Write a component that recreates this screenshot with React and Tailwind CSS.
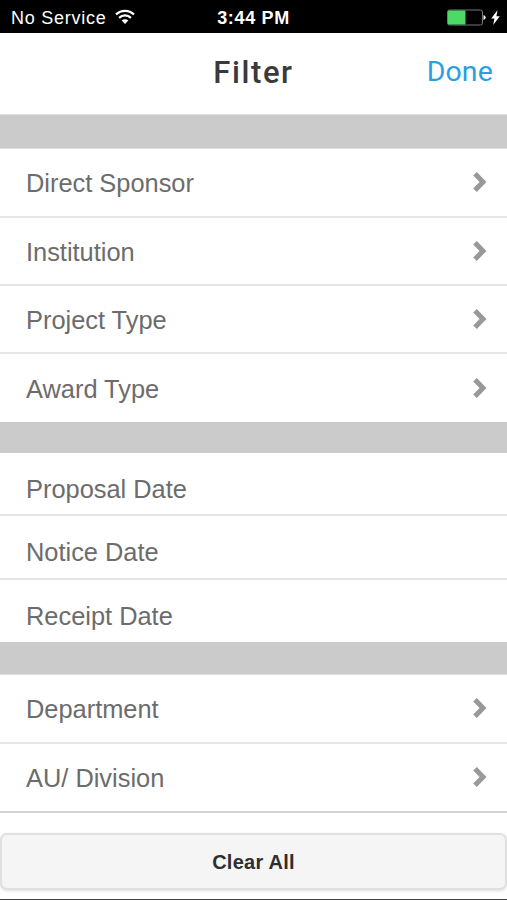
const sponsorRows = [
  { label: "Direct Sponsor", height: "h-[69px]" },
  { label: "Institution", height: "h-[68px]" },
  { label: "Project Type", height: "h-[68px]" },
  { label: "Award Type", height: "h-[68px]" },
];

const dateRows = [
  { label: "Proposal Date", height: "h-[63px]" },
  { label: "Notice Date", height: "h-[64px]" },
  { label: "Receipt Date", height: "h-[62px]" },
];

const orgRows = [
  { label: "Department", height: "h-[69px]" },
  { label: "AU/ Division", height: "h-[67px]" },
];

const Chevron = () => (
  <svg className="mb-[4px] h-[22px] w-[16px]" viewBox="0 0 16 22" fill="none" stroke="#999" strokeWidth="5">
    <path d="M3 2.8 11 11 3 19.2" />
  </svg>
);

const StatusBar = () => (
  <div className="grid h-[33px] shrink-0 grid-cols-[1fr_auto_1fr] items-center bg-black pt-[3px] text-white">
    <div className="flex items-center gap-[8px] pl-[11px]">
      <span className="text-[18px] leading-none tracking-[0.75px]">No Service</span>
      <svg className="mb-[3px] h-[16px] w-[20px]" viewBox="0 0 20 16" fill="none" stroke="#fff" strokeWidth="2.2">
        <path d="M1 5.6C6 .5 14 .5 19 5.6" />
        <path d="M4.1 8.9C7.4 5.6 12.6 5.6 15.9 8.9" />
        <path d="M6.7 11.6C8.5 9.7 11.5 9.7 13.3 11.6L10 15Z" fill="#fff" stroke="none" />
      </svg>
    </div>
    <span className="text-[18px] leading-none font-bold tracking-[0.65px]">3:44 PM</span>
    <div className="flex items-center justify-end gap-[5px] pr-[7px] pb-px">
      <svg className="h-[17px] w-[39px]" viewBox="0 0 39 17">
        <rect x="0.5" y="1" width="35" height="15" rx="2" fill="none" stroke="#777" />
        <rect x="1" y="1.5" width="17.5" height="14" rx="1" fill="#4cd964" />
        <path d="M36.5 6q2.2.6 2.2 2.5t-2.2 2.5Z" fill="#fff" />
      </svg>
      <svg className="h-[15px] w-[9px]" viewBox="0 0 9 15" fill="#fff">
        <path d="M6.6 0 .2 8.4h3.2L2.2 15 8.8 6.2H5.4Z" />
      </svg>
    </div>
  </div>
);

const FilterList = ({ rows, arrows = false, nudge = "pt-[2px]" }) => (
  <ul className="shrink-0">
    {rows.map((row, i) => (
      <li
        key={row.label}
        className={`${row.height} ${nudge} flex items-center justify-between pr-[19px] pl-[26px] ${
          i < rows.length - 1 ? "border-b-2 border-[#e6e6e6]" : ""
        }`}
      >
        <span className="text-[25.4px] leading-none text-[#6c6c6c]">{row.label}</span>
        {arrows && <Chevron />}
      </li>
    ))}
  </ul>
);

export default function App() {
  return (
    <div className="flex h-[900px] w-[507px] flex-col overflow-hidden bg-white font-['Liberation_Sans',Arial,sans-serif]">
      <StatusBar />
      <header className="grid h-[81px] shrink-0 grid-cols-[1fr_auto_1fr] items-center pb-[2px] font-[Roboto,sans-serif]">
        <h1 className="col-start-2 text-[31px] leading-none font-medium tracking-[1.6px] text-[#3a3a3a]">Filter</h1>
        <button className="justify-self-end pr-[14px] text-[28.4px] leading-none tracking-[0.2px] text-[#2a9fe6]">Done</button>
      </header>
      <div className="h-[35px] shrink-0 border-y border-[#dedede] bg-[#cbcbcb]" />
      <FilterList rows={sponsorRows} arrows nudge="pt-[3px]" />
      <div className="h-[31px] shrink-0 bg-[#cbcbcb]" />
      <FilterList rows={dateRows} nudge="pt-[12px]" />
      <div className="h-[33px] shrink-0 border-b border-[#dedede] bg-[#cbcbcb]" />
      <FilterList rows={orgRows} arrows />
      <div className="h-[2px] shrink-0 bg-[#d2d4d3]" />
      <div className="flex grow flex-col justify-between border-b border-[#444] pt-[20px]">
        <button className="h-[57px] w-full rounded-[7px] border-2 border-[#e0e0e0] bg-[#f5f5f5] text-[20px] leading-none font-bold tracking-[0.25px] text-[#2f2f2f] shadow-[0_1px_3px_rgba(0,0,0,0.12)]">
          Clear All
        </button>
      </div>
    </div>
  );
}
